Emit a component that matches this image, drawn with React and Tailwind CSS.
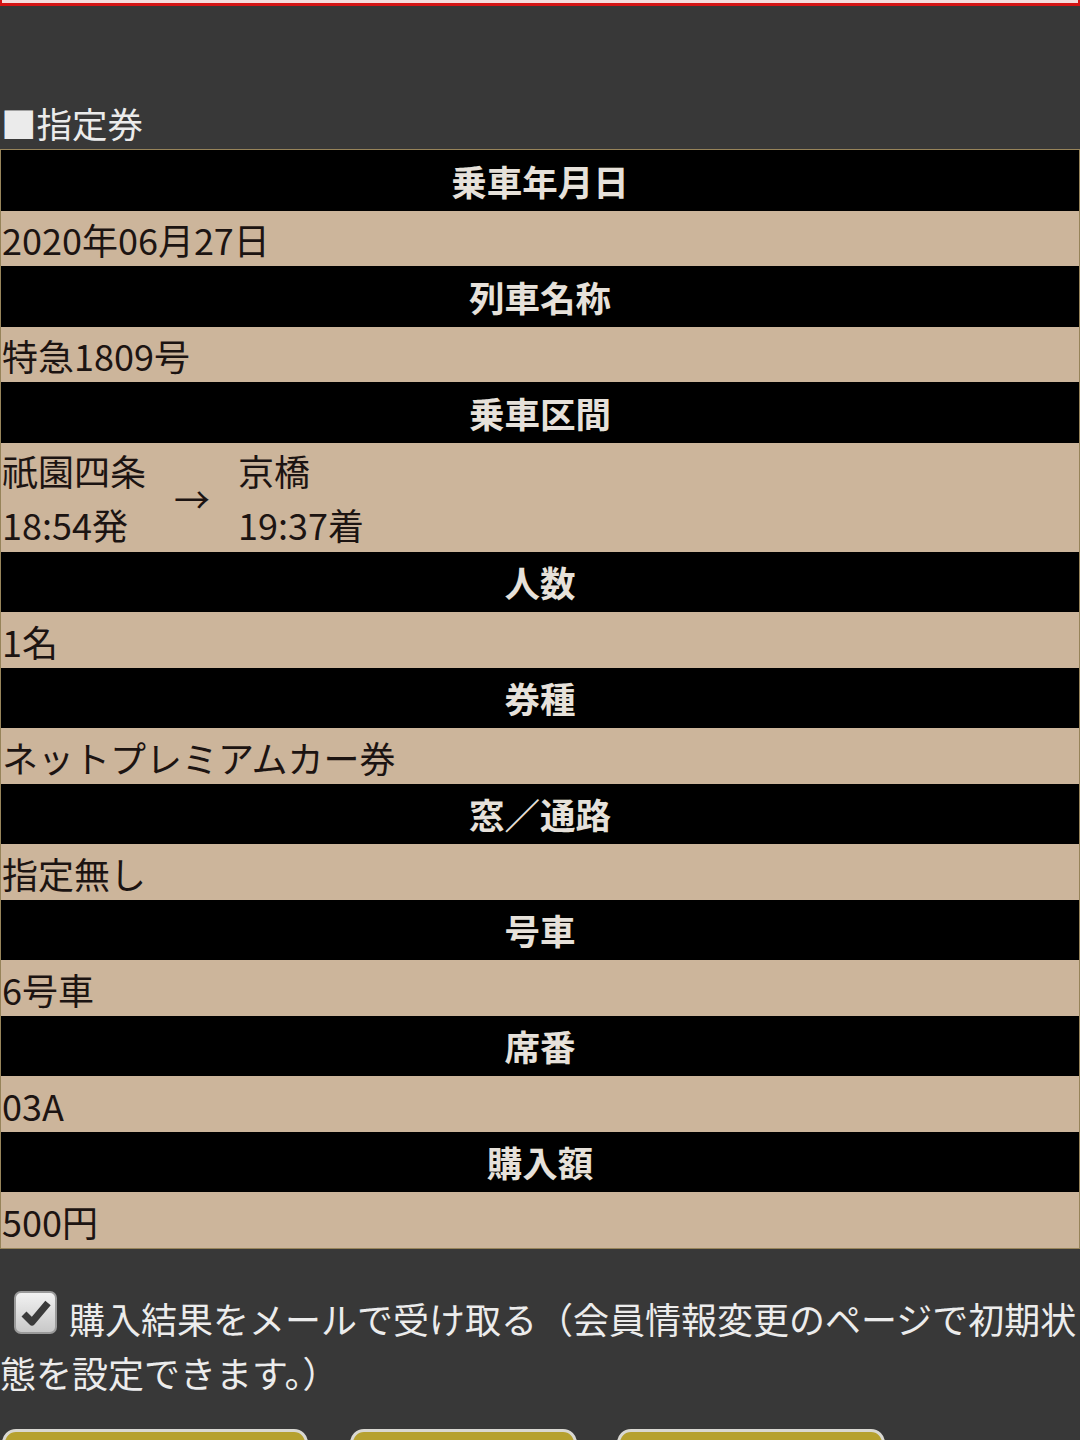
const font = { fontFamily: '"Noto Sans CJK JP", "Noto Sans", sans-serif' };

const rows = [
  { label: '乗車年月日', value: '2020年06月27日' },
  { label: '列車名称', value: '特急1809号' },
  { label: '乗車区間', route: true },
  { label: '人数', value: '1名' },
  { label: '券種', value: 'ネットプレミアムカー券' },
  { label: '窓／通路', value: '指定無し' },
  { label: '号車', value: '6号車' },
  { label: '席番', value: '03A' },
  { label: '購入額', value: '500円' },
];

const Header = ({ children }) => (
  <div className="h-[60.5px] bg-black flex items-center justify-center text-[35.5px] font-bold text-[#e6e1da]">
    {children}
  </div>
);

const Route = () => (
  <div className="h-[109px] bg-[#ccb59b] flex items-center text-[36px] text-[#1c1412] pl-[1px]">
    <div className="flex flex-col leading-[54px]">
      <span>祇園四条</span>
      <span>18:54発</span>
    </div>
    <div className="ml-[28px] mr-[28px] pt-[2px]">→</div>
    <div className="flex flex-col leading-[54px]">
      <span>京橋</span>
      <span>19:37着</span>
    </div>
  </div>
);

const CheckBox = () => (
  <span className="inline-flex align-[7px] ml-[14px] mr-[12px] w-[43px] h-[43px] rounded-[7px] bg-gradient-to-b from-[#f2f2f2] to-[#c8c8c8] border-2 border-[#9a9a9a] items-center justify-center">
    <svg width="30" height="28" viewBox="0 0 30 28">
      <path d="M3 15 L11 23 L27 4" fill="none" stroke="#3a3a3a" strokeWidth="7" strokeLinejoin="round" />
    </svg>
  </span>
);

export default function App() {
  return (
    <div className="w-[1080px] h-[1440px] overflow-hidden bg-[#383838]" style={font}>
      <div className="h-[6px] bg-[#f4dede] border-x-2 border-b-[3px] border-[#d41414]" />
      <div className="h-[91px]" />
      <div className="h-[52px] flex items-end text-[35.5px] leading-[52px] text-[#ebebeb] pl-[1px]">
        ■指定券
      </div>
      <div className="border border-[#97845a]">
        {rows.map((r) => (
          <div key={r.label}>
            <Header>{r.label}</Header>
            {r.route ? (
              <Route />
            ) : (
              <div className="h-[55.5px] bg-[#ccb59b] flex items-center pt-[2px] pl-[1px] text-[36px] text-[#1c1412]">
                {r.value}
              </div>
            )}
          </div>
        ))}
      </div>
      <div className="mt-[42px] text-[36px] leading-[54px] text-[#ececec]">
        <CheckBox />
        購入結果をメールで受け取る（会員情報変更のページで初期状態を設定できます。）
      </div>
      <div className="mt-[30px] flex">
        <div className="ml-[2px] w-[306px] h-[60px] rounded-t-[14px] border-[3px] border-[#d9d8d2] bg-[#b6a12f]" />
        <div className="ml-[42px] w-[227px] h-[60px] rounded-t-[14px] border-[3px] border-[#d9d8d2] bg-[#b6a12f]" />
        <div className="ml-[40px] w-[268px] h-[60px] rounded-t-[14px] border-[3px] border-[#d9d8d2] bg-[#b6a12f]" />
      </div>
    </div>
  );
}
